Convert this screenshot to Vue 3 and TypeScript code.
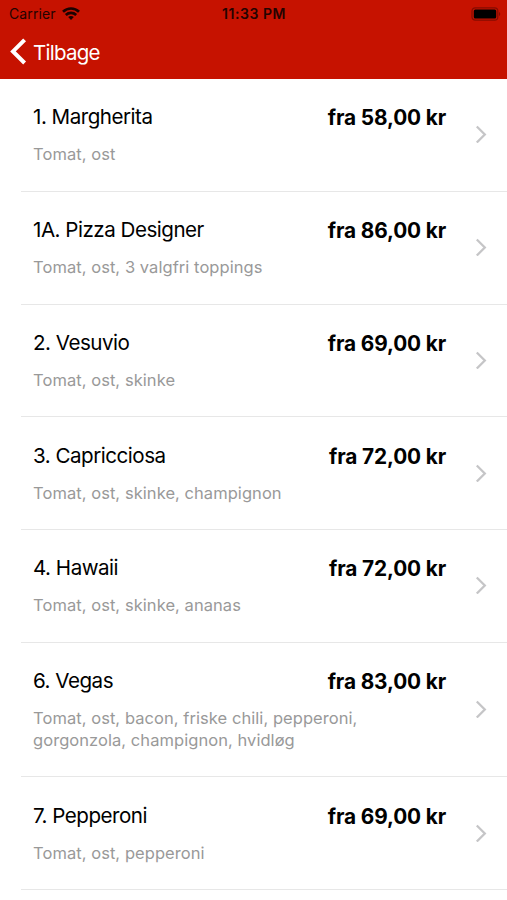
<script setup lang="ts">
interface MenuItem {
  name: string
  price: string
  toppings: string
}

const items: MenuItem[] = [
  { name: '1. Margherita', price: 'fra 58,00 kr', toppings: 'Tomat, ost' },
  { name: '1A. Pizza Designer', price: 'fra 86,00 kr', toppings: 'Tomat, ost, 3 valgfri toppings' },
  { name: '2. Vesuvio', price: 'fra 69,00 kr', toppings: 'Tomat, ost, skinke' },
  { name: '3. Capricciosa', price: 'fra 72,00 kr', toppings: 'Tomat, ost, skinke, champignon' },
  { name: '4. Hawaii', price: 'fra 72,00 kr', toppings: 'Tomat, ost, skinke, ananas' },
  { name: '6. Vegas', price: 'fra 83,00 kr', toppings: 'Tomat, ost, bacon, friske chili, pepperoni, gorgonzola, champignon, hvidløg' },
  { name: '7. Pepperoni', price: 'fra 69,00 kr', toppings: 'Tomat, ost, pepperoni' },
]
</script>

<template>
  <div class="screen">
    <header class="header">
      <div class="status">
        <div class="carrier">
          <span>Carrier</span>
          <svg class="wifi" width="18" height="13" viewBox="0 0 18 13" fill="none" stroke="#1c0200" stroke-width="2.7">
            <path d="M1 4.7C5.5.4 12.5.4 17 4.7" />
            <path d="M3.8 8C6.8 5.2 11.2 5.2 14.2 8" />
            <path d="M6.2 10.1C7.8 8.7 10.2 8.7 11.8 10.1L9 12.9Z" fill="#1c0200" stroke="none" />
          </svg>
        </div>
        <span class="time">11:33 PM</span>
        <svg class="battery" width="30" height="14" viewBox="0 0 30 14">
          <rect x="1" y="0.8" width="25.8" height="12.4" rx="3.2" fill="none" stroke="#850c00" stroke-width="1.2" />
          <rect x="2.8" y="2.6" width="22.4" height="8.8" rx="1.5" fill="#000" />
          <path d="M28 5C29.7 5.6 29.7 8.4 28 9Z" fill="#850c00" />
        </svg>
      </div>
      <nav class="nav">
        <svg width="17" height="27" viewBox="0 0 17 27" fill="none" stroke="#fff" stroke-width="4">
          <path d="M14.6 1.8L3 13.4L14.6 25" />
        </svg>
        <span class="back">Tilbage</span>
      </nav>
    </header>
    <main class="list">
      <article v-for="item in items" :key="item.name" class="row">
        <div class="content">
          <div class="heading">
            <h2 class="name">{{ item.name }}</h2>
            <span class="price">{{ item.price }}</span>
          </div>
          <p class="toppings">{{ item.toppings }}</p>
        </div>
        <svg class="chevron" width="12" height="18" viewBox="0 0 12 18" fill="none" stroke="#c5c5c7" stroke-width="2.3">
          <path d="M1.8 1.5L9.8 9.5L1.8 17.5" />
        </svg>
      </article>
    </main>
  </div>
</template>

<style>
body {
  margin: 0;
  background: #fff;
}
</style>

<style scoped>
.screen {
  height: 900px;
  overflow: hidden;
  background: #fff;
  color: #000;
  font-family: Inter, "Liberation Sans", sans-serif;
}
.header {
  box-sizing: border-box;
  height: 79px;
  background: #c61200;
}
.status {
  display: grid;
  grid-template-columns: 1fr auto 1fr;
  align-items: center;
  height: 27px;
  padding: 0 6px 0 9px;
  color: #240300;
  font-size: 14px;
}
.carrier {
  display: flex;
  align-items: center;
  gap: 6px;
  letter-spacing: 0.1px;
}
.wifi {
  margin-top: -1px;
}
.time {
  margin-right: 2px;
  font-weight: 600;
  letter-spacing: 0.55px;
}
.battery {
  justify-self: end;
}
.nav {
  display: flex;
  align-items: center;
  gap: 6px;
  height: 49px;
  padding-left: 10px;
}
.back {
  padding-top: 1px;
  color: #fff;
  font-size: 20.5px;
  letter-spacing: -0.75px;
}
.list {
  padding-left: 21px;
}
.row {
  box-sizing: border-box;
  display: flex;
  align-items: center;
  min-height: 112.75px;
  padding: 22.4px 20px 25.35px 12px;
  border-bottom: 1px solid #e7e7e7;
}
.content {
  flex: 1;
}
.heading {
  display: flex;
  justify-content: space-between;
  padding-right: 29px;
}
.name {
  margin: 0;
  font-size: 20.6px;
  line-height: 32px;
  font-weight: 400;
  letter-spacing: -0.5px;
}
.price {
  font-size: 20.8px;
  line-height: 34px;
  font-weight: 700;
  letter-spacing: -0.13px;
}
.toppings {
  width: 340px;
  margin: 8px 0 0;
  color: #999;
  font-size: 16.5px;
  line-height: 22px;
  letter-spacing: 0.06px;
}
.chevron {
  flex: none;
  margin-top: 2px;
}
</style>
